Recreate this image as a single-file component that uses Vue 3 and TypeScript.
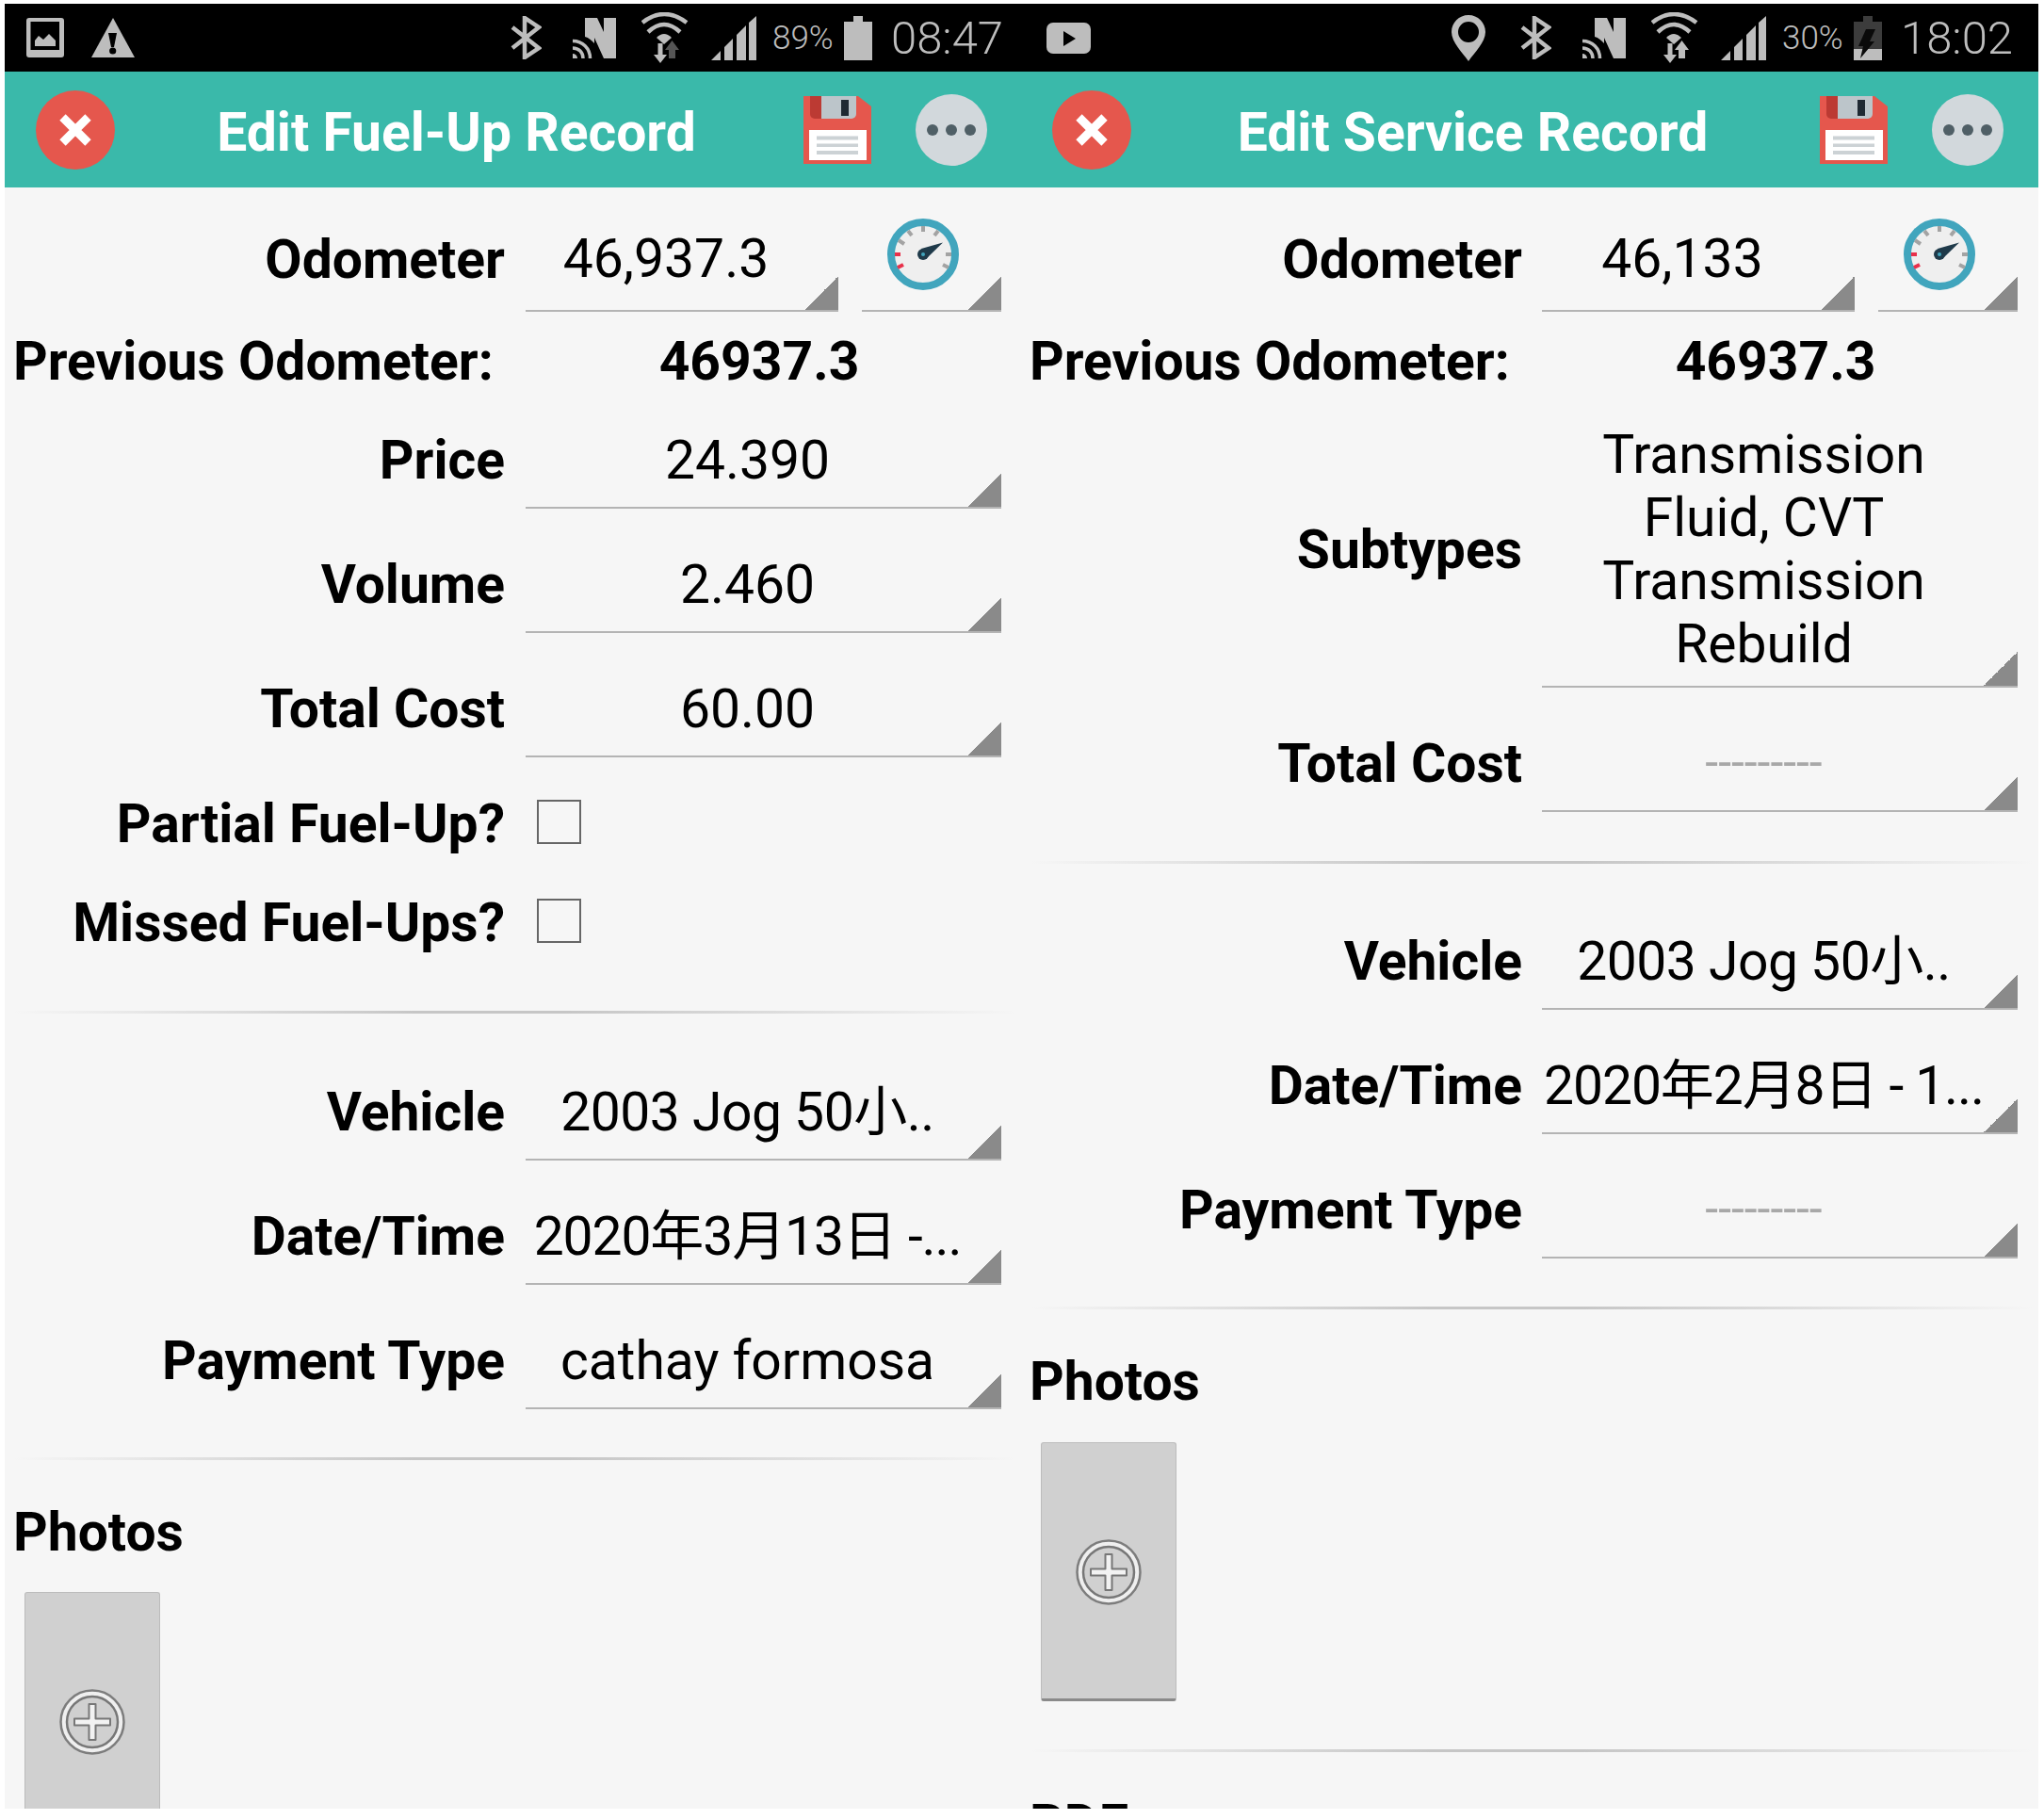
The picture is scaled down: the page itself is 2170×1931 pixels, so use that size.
<script setup lang="ts">
interface Row {
  label: string
  value?: string
  kind?: 'check' | 'empty'
}

interface Panel {
  key: string
  title: string
  odometer: string
  statusLeft: string[]
  statusRight: string[]
  percent: string
  battery: string
  time: string
  upper: Row[]
  lower: Row[]
}

const panels: Panel[] = [
  {
    key: 'fuel',
    title: 'Edit Fuel-Up Record',
    odometer: '46,937.3',
    statusLeft: ['gallery', 'warn'],
    statusRight: ['bt', 'nfc', 'wifi', 'signal'],
    percent: '89%',
    battery: 'batt-full',
    time: '08:47',
    upper: [
      { label: 'Price', value: '24.390' },
      { label: 'Volume', value: '2.460' },
      { label: 'Total Cost', value: '60.00' },
      { label: 'Partial Fuel-Up?', kind: 'check' },
      { label: 'Missed Fuel-Ups?', kind: 'check' },
    ],
    lower: [
      { label: 'Vehicle', value: '2003 Jog 50小..' },
      { label: 'Date/Time', value: '2020年3月13日 -...' },
      { label: 'Payment Type', value: 'cathay formosa' },
    ],
  },
  {
    key: 'service',
    title: 'Edit Service Record',
    odometer: '46,133',
    statusLeft: ['youtube'],
    statusRight: ['pin', 'bt', 'nfc', 'wifi-up', 'signal'],
    percent: '30%',
    battery: 'batt-low',
    time: '18:02',
    upper: [
      { label: 'Subtypes', value: 'Transmission Fluid, CVT Transmission Rebuild' },
      { label: 'Total Cost', kind: 'empty' },
    ],
    lower: [
      { label: 'Vehicle', value: '2003 Jog 50小..' },
      { label: 'Date/Time', value: '2020年2月8日 - 1...' },
      { label: 'Payment Type', kind: 'empty' },
    ],
  },
]
</script>

<template>
  <svg class="defs" width="0" height="0" aria-hidden="true">
    <symbol id="gallery" viewBox="0 0 40 42">
      <path fill-rule="evenodd" fill="#bdbdbd" d="M3 0h34a3 3 0 0 1 3 3v36a3 3 0 0 1-3 3H3a3 3 0 0 1-3-3V3a3 3 0 0 1 3-3zm1.500 4v30h30.500V4z" />
      <path d="M9 30v-6l4-5 5 4 6-6 7 7v6z" fill="#bdbdbd" />
    </symbol>
    <symbol id="warn" viewBox="0 0 46 42">
      <path d="M23 0L46 42H0z" fill="#bdbdbd" />
      <path d="M18 16h9l-3 15h-3z" fill="#000" />
      <circle cx="22.700" cy="35" r="3.600" fill="#000" />
    </symbol>
    <symbol id="youtube" viewBox="0 0 47 33">
      <rect width="47" height="33" rx="7" fill="#bdbdbd" />
      <path d="M18 9l13 8-13 8z" fill="#000" />
    </symbol>
    <symbol id="pin" viewBox="0 0 36 49">
      <path fill-rule="evenodd" fill="#bdbdbd" d="M18 0c10 0 18 8 18 18 0 11-12 22-18 31C12 40 0 29 0 18 0 8 8 0 18 0zm0 7a11 11 0 1 0 0 22 11 11 0 0 0 0-22z" />
    </symbol>
    <symbol id="bt" viewBox="0 0 33 46">
      <path d="M2 12l28 22-15 10V2l15 10L2 34" fill="none" stroke="#bdbdbd" stroke-width="4.500" />
    </symbol>
    <symbol id="nfc" viewBox="0 0 46 43">
      <path d="M13 0h13l7 15V0h13v43H33L23 21v6c-3-3-6-6-10-7z" fill="#bdbdbd" />
      <path d="M0 24.500c10.500 0 18.500 8 18.500 18.500M0 32c6.500 0 11 4.500 11 11" fill="none" stroke="#bdbdbd" stroke-width="3.500" />
      <path d="M0 38a5 5 0 0 1 5 5H0z" fill="#bdbdbd" />
    </symbol>
    <symbol id="wifi" viewBox="0 0 50 54">
      <path d="M1 11Q24-7 48 11M7 21Q24 5 41 21" fill="none" stroke="#bdbdbd" stroke-width="4.500" />
      <path d="M16 27Q24 19 32 27l-8 7z" fill="#bdbdbd" />
      <path d="M17.500 33h5v12H27l-7 9-7-9h4.500z" fill="#bdbdbd" />
      <path d="M29 40h-4l7.500-10L40 40h-4v9h-7z" fill="#555" />
    </symbol>
    <symbol id="wifi-up" viewBox="0 0 50 54">
      <path d="M1 11Q24-7 48 11M7 21Q24 5 41 21" fill="none" stroke="#bdbdbd" stroke-width="4.500" />
      <path d="M16 27Q24 19 32 27l-8 7z" fill="#bdbdbd" />
      <path d="M17.500 33h5v12H27l-7 9-7-9h4.500z" fill="#bdbdbd" />
      <path d="M29 40h-4l7.500-10L40 40h-4v9h-7z" fill="#bdbdbd" />
    </symbol>
    <symbol id="signal" viewBox="0 0 48 47">
      <path d="M0 47l10-10v10zM14 47V33l9-9v23zM27 47V20l10-10v37zM40 47V7l8-7v47z" fill="#bdbdbd" />
    </symbol>
    <symbol id="batt-full" viewBox="0 0 30 47">
      <path d="M10 0h10v6h10v41H0V6h10z" fill="#bdbdbd" />
    </symbol>
    <symbol id="batt-low" viewBox="0 0 30 47">
      <path d="M10 0h10v6h10v29H0V6h10z" fill="#3c3c3c" />
      <rect y="35" width="30" height="12" fill="#bdbdbd" />
      <path d="M13 14h10l-6 13h5L7 45l3-13H5z" fill="#0a0a0a" />
    </symbol>
    <symbol id="floppy" viewBox="0 0 72 72">
      <path d="M0 0h58l14 11v61H0z" fill="#e5574d" />
      <path d="M7 0h14v24h-9a5 5 0 0 1-5-5z" fill="#bc3a33" />
      <path d="M19 0h37v19a5 5 0 0 1-5 5H19z" fill="#bcc5ca" />
      <rect x="40" y="4" width="8" height="17" fill="#1f2a33" />
      <rect x="6" y="36" width="61" height="32" fill="#fff" />
      <path d="M14 42.500h44v4H14zM14 50.500h44v3.500H14zM14 58h44v4H14z" fill="#ccd2d5" />
    </symbol>
    <symbol id="gauge" viewBox="0 0 76 76">
      <circle cx="38" cy="38" r="34" fill="#efefef" stroke="#41a5bd" stroke-width="8" />
      <path d="M38 8v6M22 13l4 5M54 13l-4 5M12 23l6 4M62 38h6M59 49l6 3" stroke="#a3a3a3" stroke-width="4" fill="none" />
      <path d="M8 38h6M11 52l6-3" stroke="#e8304a" stroke-width="4" fill="none" />
      <path d="M59 25.500L36 32l5 11z" fill="#1f3a4a" />
      <circle cx="38" cy="38" r="6" fill="#1f3a4a" />
      <circle cx="38" cy="38" r="2" fill="#41a5bd" />
    </symbol>
    <symbol id="add" viewBox="0 0 70 70">
      <circle cx="35" cy="35" r="33.500" fill="#efefef" stroke="#7d7d7d" stroke-width="2.500" />
      <circle cx="35" cy="35" r="27" fill="#d0d0d0" stroke="#777" stroke-width="2.500" />
      <path d="M31.500 16h7v15.500H54v7H38.500V54h-7V38.500H16v-7h15.500z" fill="#f2f2f2" stroke="#777" stroke-width="2" stroke-linejoin="round" />
    </symbol>
  </svg>

  <div class="screens">
    <section v-for="panel in panels" :key="panel.key" class="panel" :class="panel.key">
      <div class="status">
        <div class="status-group">
          <svg v-for="icon in panel.statusLeft" :key="icon" class="st" :class="'st-' + icon"><use :href="'#' + icon" /></svg>
        </div>
        <div class="status-group">
          <svg v-for="icon in panel.statusRight" :key="icon" class="st" :class="'st-' + icon"><use :href="'#' + icon" /></svg>
          <span class="percent">{{ panel.percent }}</span>
          <svg class="st st-batt"><use :href="'#' + panel.battery" /></svg>
          <span class="time">{{ panel.time }}</span>
        </div>
      </div>

      <header class="toolbar">
        <div class="close">
          <svg viewBox="0 0 84 84" width="84" height="84">
            <path d="M28.500 28.500l27 27M55.500 28.500l-27 27" stroke="#fff" stroke-width="9" fill="none" />
          </svg>
        </div>
        <h1 class="title">{{ panel.title }}</h1>
        <svg class="floppy"><use href="#floppy" /></svg>
        <div class="more"><i></i><i></i><i></i></div>
      </header>

      <div class="content">
        <div class="row row-odo">
          <span class="label">Odometer</span>
          <div class="odo-fields">
            <div class="field odo-value">{{ panel.odometer }}</div>
            <div class="field odo-gauge">
              <svg class="gauge"><use href="#gauge" /></svg>
            </div>
          </div>
        </div>

        <div class="row-prev">
          <span class="prev-label">Previous Odometer:</span>
          <span class="prev-value">46937.3</span>
        </div>

        <template v-for="row in panel.upper" :key="row.label">
          <div v-if="row.kind === 'check'" class="row row-check">
            <span class="label">{{ row.label }}</span>
            <span class="checkbox"></span>
          </div>
          <div v-else class="row row-field">
            <span class="label">{{ row.label }}</span>
            <div class="field" :class="{ multi: row.label === 'Subtypes' }">
              <span v-if="row.kind === 'empty'" class="empty">---------</span>
              <template v-else>{{ row.value }}</template>
            </div>
          </div>
        </template>

        <div class="divider divider-one"></div>

        <div class="lower">
          <div v-for="row in panel.lower" :key="row.label" class="row row-field">
            <span class="label">{{ row.label }}</span>
            <div class="field" :class="{ 'tight-vehicle': row.label === 'Vehicle', 'tight-date': row.label === 'Date/Time' }">
              <span v-if="row.kind === 'empty'" class="empty">---------</span>
              <template v-else>{{ row.value }}</template>
            </div>
          </div>
        </div>

        <div class="divider divider-two"></div>

        <h2 class="heading photos">Photos</h2>
        <div class="photo-box">
          <svg class="add"><use href="#add" /></svg>
        </div>

        <template v-if="panel.key === 'service'">
          <div class="divider divider-three"></div>
          <h2 class="heading pdf">PDF</h2>
        </template>
      </div>
    </section>
  </div>
</template>

<style>
html,
body {
  margin: 0;
  background: #fff;
}
</style>

<style scoped>
.defs {
  position: absolute;
}

.screens {
  display: flex;
  width: 2159px;
  height: 1916px;
  margin: 4px 5px 0;
  overflow: hidden;
  font-family: Roboto, "Noto Sans CJK SC", sans-serif;
  color: #000;
}

.panel {
  flex: none;
  width: 1079px;
  height: 1916px;
  overflow: hidden;
  background: #f6f6f6;
}

.panel.service {
  width: 1080px;
}

.status {
  display: flex;
  justify-content: space-between;
  align-items: center;
  height: 72px;
  padding: 0 20px 0 23px;
  background: #000;
}

.service .status {
  padding-left: 27px;
  padding-right: 28px;
}

.status-group {
  display: flex;
  align-items: center;
}

.st {
  display: block;
  flex: none;
}

.st-gallery { width: 40px; height: 42px; }
.st-warn { width: 46px; height: 42px; margin-left: 29px; }
.st-youtube { width: 47px; height: 33px; }
.st-pin { width: 36px; height: 49px; margin-right: 37px; }
.st-bt { width: 33px; height: 46px; margin-right: 33px; }
.st-nfc { width: 46px; height: 43px; margin-right: 27px; }
.st-wifi,
.st-wifi-up { width: 50px; height: 54px; margin-right: 24px; }
.st-signal { width: 48px; height: 47px; margin-right: 17px; }
.st-batt { width: 30px; height: 47px; margin-left: 10px; margin-right: 20px; }

.percent {
  width: 66px;
  font-size: 35px;
  font-weight: 300;
  color: #bdbdbd;
  white-space: nowrap;
}

.time {
  width: 118px;
  font-size: 49px;
  font-weight: 300;
  color: #bdbdbd;
  white-space: nowrap;
}

.toolbar {
  display: flex;
  align-items: center;
  height: 123px;
  padding: 0 36px 0 33px;
  background: #3ab9aa;
}

.service .toolbar {
  padding-right: 37px;
}

.close {
  flex: none;
  width: 84px;
  height: 84px;
  border-radius: 50%;
  background: #e5574d;
}

.close svg {
  display: block;
}

.title {
  flex: 1;
  margin: 0;
  padding: 7px 6px 0 0;
  font-size: 57px;
  font-weight: 700;
  line-height: 70px;
  text-align: center;
  color: #fff;
  white-space: nowrap;
}

.floppy {
  flex: none;
  width: 72px;
  height: 72px;
  margin-right: 1px;
}

.more {
  flex: none;
  display: flex;
  justify-content: center;
  align-items: center;
  gap: 8px;
  width: 76px;
  height: 76px;
  margin-left: 46px;
  border-radius: 50%;
  background: #d2d8dc;
}

.more i {
  width: 12px;
  height: 12px;
  border-radius: 50%;
  background: #4f5f66;
}

.content {
  font-size: 57px;
}

.row {
  display: flex;
  align-items: center;
  gap: 22px;
}

.service .row {
  gap: 21px;
}

.label {
  flex: none;
  box-sizing: border-box;
  width: 531px;
  padding-bottom: 2px;
  font-weight: 700;
  text-align: right;
  white-space: nowrap;
}

.service .label {
  width: 532px;
}

.field {
  display: flex;
  justify-content: center;
  align-items: center;
  box-sizing: border-box;
  width: 505px;
  min-height: 102px;
  padding-right: 34px;
  border-bottom: 2px solid #b4b4b4;
  background: linear-gradient(to bottom right, transparent 50%, #8a8a8a 50%) right bottom / 36px 36px no-repeat;
  line-height: 67px;
  text-align: center;
  white-space: nowrap;
}

.field.multi {
  padding: 11px 34px 11px 0;
  white-space: normal;
}

.tight-vehicle {
  letter-spacing: -0.5px;
}

.tight-date {
  letter-spacing: -1.1px;
}

.row-odo {
  margin-top: 30px;
}

.row-odo .label,
.odo-value {
  padding-bottom: 10px;
}

.odo-fields {
  display: flex;
  gap: 25px;
}

.odo-value {
  width: 332px;
}

.odo-gauge {
  justify-content: flex-start;
  width: 148px;
  padding: 0;
}

.gauge {
  width: 76px;
  height: 76px;
  margin: 0 0 18px 27px;
}

.row-prev {
  display: flex;
  align-items: center;
  height: 104px;
  margin-bottom: 3px;
  padding-left: 9px;
  font-weight: 700;
  white-space: nowrap;
}

.prev-label {
  width: 632px;
}

.prev-value {
  width: 320px;
  text-align: center;
}

.row-field + .row-field {
  margin-top: 30px;
}

.row-check {
  height: 105px;
}

.row-check .label {
  padding: 3px 0 0;
}

.row-field + .row-check {
  margin-top: 16px;
}

.checkbox {
  box-sizing: border-box;
  width: 47px;
  height: 47px;
  margin-left: 12px;
  border: 2px solid #666;
}

.empty {
  padding-bottom: 2px;
  font-size: 50px;
  font-weight: 400;
  letter-spacing: 0;
  color: #a8a8a8;
}

.divider {
  height: 3px;
  margin: 0 5px 0 10px;
  background: linear-gradient(90deg, transparent, #c6c6c6 40%, #c6c6c6 55%, transparent);
}

.divider-one {
  margin-top: 43px;
}

.service .divider-one {
  margin-top: 52px;
}

.lower {
  margin-top: 54px;
}

.service .lower {
  margin-top: 53px;
}

.divider-two {
  margin-top: 51px;
}

.heading {
  margin: 42px 0 0 9px;
  font-size: 57px;
  font-weight: 700;
  line-height: 70px;
}

.photo-box {
  display: flex;
  justify-content: center;
  align-items: center;
  box-sizing: border-box;
  width: 144px;
  height: 275px;
  margin: 28px 0 0 21px;
  padding-top: 2px;
  border: 1px solid #bcbcbc;
  border-bottom: 3px solid #8a8a8a;
  border-radius: 3px;
  background: #d0d0d0;
}

.service .photo-box {
  margin-top: 29px;
}

.add {
  width: 70px;
  height: 70px;
}

.divider-three {
  margin-top: 51px;
}
</style>
